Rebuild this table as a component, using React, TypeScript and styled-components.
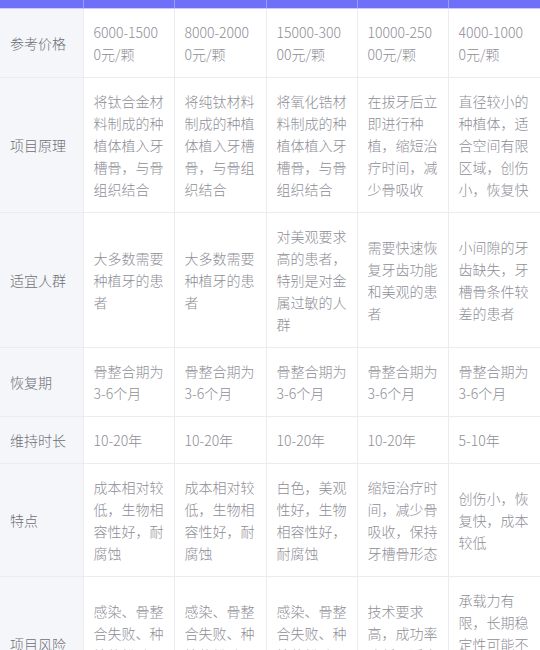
import React from 'react';
import styled, { createGlobalStyle } from 'styled-components';

const GlobalStyle = createGlobalStyle`
    html, body {
        margin: 0;
        padding: 0;
        background: #ffffff;
    }
    body {
        font-family: "Noto Sans CJK SC", "Noto Sans", sans-serif;
        -webkit-font-smoothing: antialiased;
    }
`;

type Row = {
    label: string;
    cells: string[];
};

const rows: Row[] = [
    {
        label: '参考价格',
        cells: ['6000-15000元/颗', '8000-20000元/颗', '15000-30000元/颗', '10000-25000元/颗', '4000-10000元/颗'],
    },
    {
        label: '项目原理',
        cells: [
            '将钛合金材料制成的种植体植入牙槽骨，与骨组织结合',
            '将纯钛材料制成的种植体植入牙槽骨，与骨组织结合',
            '将氧化锆材料制成的种植体植入牙槽骨，与骨组织结合',
            '在拔牙后立即进行种植，缩短治疗时间，减少骨吸收',
            '直径较小的种植体，适合空间有限区域，创伤小，恢复快',
        ],
    },
    {
        label: '适宜人群',
        cells: [
            '大多数需要种植牙的患者',
            '大多数需要种植牙的患者',
            '对美观要求高的患者，特别是对金属过敏的人群',
            '需要快速恢复牙齿功能和美观的患者',
            '小间隙的牙齿缺失，牙槽骨条件较差的患者',
        ],
    },
    {
        label: '恢复期',
        cells: ['骨整合期为3-6个月', '骨整合期为3-6个月', '骨整合期为3-6个月', '骨整合期为3-6个月', '骨整合期为3-6个月'],
    },
    {
        label: '维持时长',
        cells: ['10-20年', '10-20年', '10-20年', '10-20年', '5-10年'],
    },
    {
        label: '特点',
        cells: [
            '成本相对较低，生物相容性好，耐腐蚀',
            '成本相对较低，生物相容性好，耐腐蚀',
            '白色，美观性好，生物相容性好，耐腐蚀',
            '缩短治疗时间，减少骨吸收，保持牙槽骨形态',
            '创伤小，恢复快，成本较低',
        ],
    },
    {
        label: '项目风险',
        cells: [
            '感染、骨整合失败、种植体松动、神经损伤等',
            '感染、骨整合失败、种植体松动、神经损伤等',
            '感染、骨整合失败、种植体松动、神经损伤等',
            '技术要求高，成功率降低，适应症较严格',
            '承载力有限，长期稳定性可能不如常规种植体',
        ],
    },
];

const columnWidths = [83, 91, 92, 91, 91, 92];

export default function App() {
    return (
        <>
            <GlobalStyle />
            <CompareTable>
                <colgroup>
                    {columnWidths.map((w, i) => (
                        <col key={`col-${i}`} style={{ width: w }} />
                    ))}
                </colgroup>
                <thead>
                    <tr>
                        {columnWidths.map((_, i) => (
                            <HeadCell key={`head-${i}`} />
                        ))}
                    </tr>
                </thead>
                <tbody>
                    {rows.map((row) => (
                        <tr key={row.label}>
                            <LabelCell>{row.label}</LabelCell>
                            {row.cells.map((text, i) => (
                                <DataCell key={`${row.label}-${i}`}>{text}</DataCell>
                            ))}
                        </tr>
                    ))}
                </tbody>
            </CompareTable>
        </>
    );
}

const CompareTable = styled.table`
    width: 540px;
    table-layout: fixed;
    border-collapse: collapse;
    border-spacing: 0;
    font-size: 14px;
    line-height: 22px;
    font-weight: 300;
`;

const HeadCell = styled.th`
    height: 8px;
    padding: 0;
    background: #6e71f7;
    border-right: 1px solid #9b9dfa;
    border-bottom: 1px solid #c9cafc;

    &:last-child {
        border-right: none;
    }
`;

const BodyCell = styled.td`
    padding: 12px 10px;
    vertical-align: middle;
    border-right: 1px solid #ececf0;
    border-bottom: 1px solid #ececf0;
    word-break: break-all;
    font-weight: 300;

    &:last-child {
        border-right: none;
    }
`;

const LabelCell = styled(BodyCell)`
    background: #f5f6fa;
    color: #6e6e76;
`;

const DataCell = styled(BodyCell)`
    background: #ffffff;
    color: #8e8e96;
`;
